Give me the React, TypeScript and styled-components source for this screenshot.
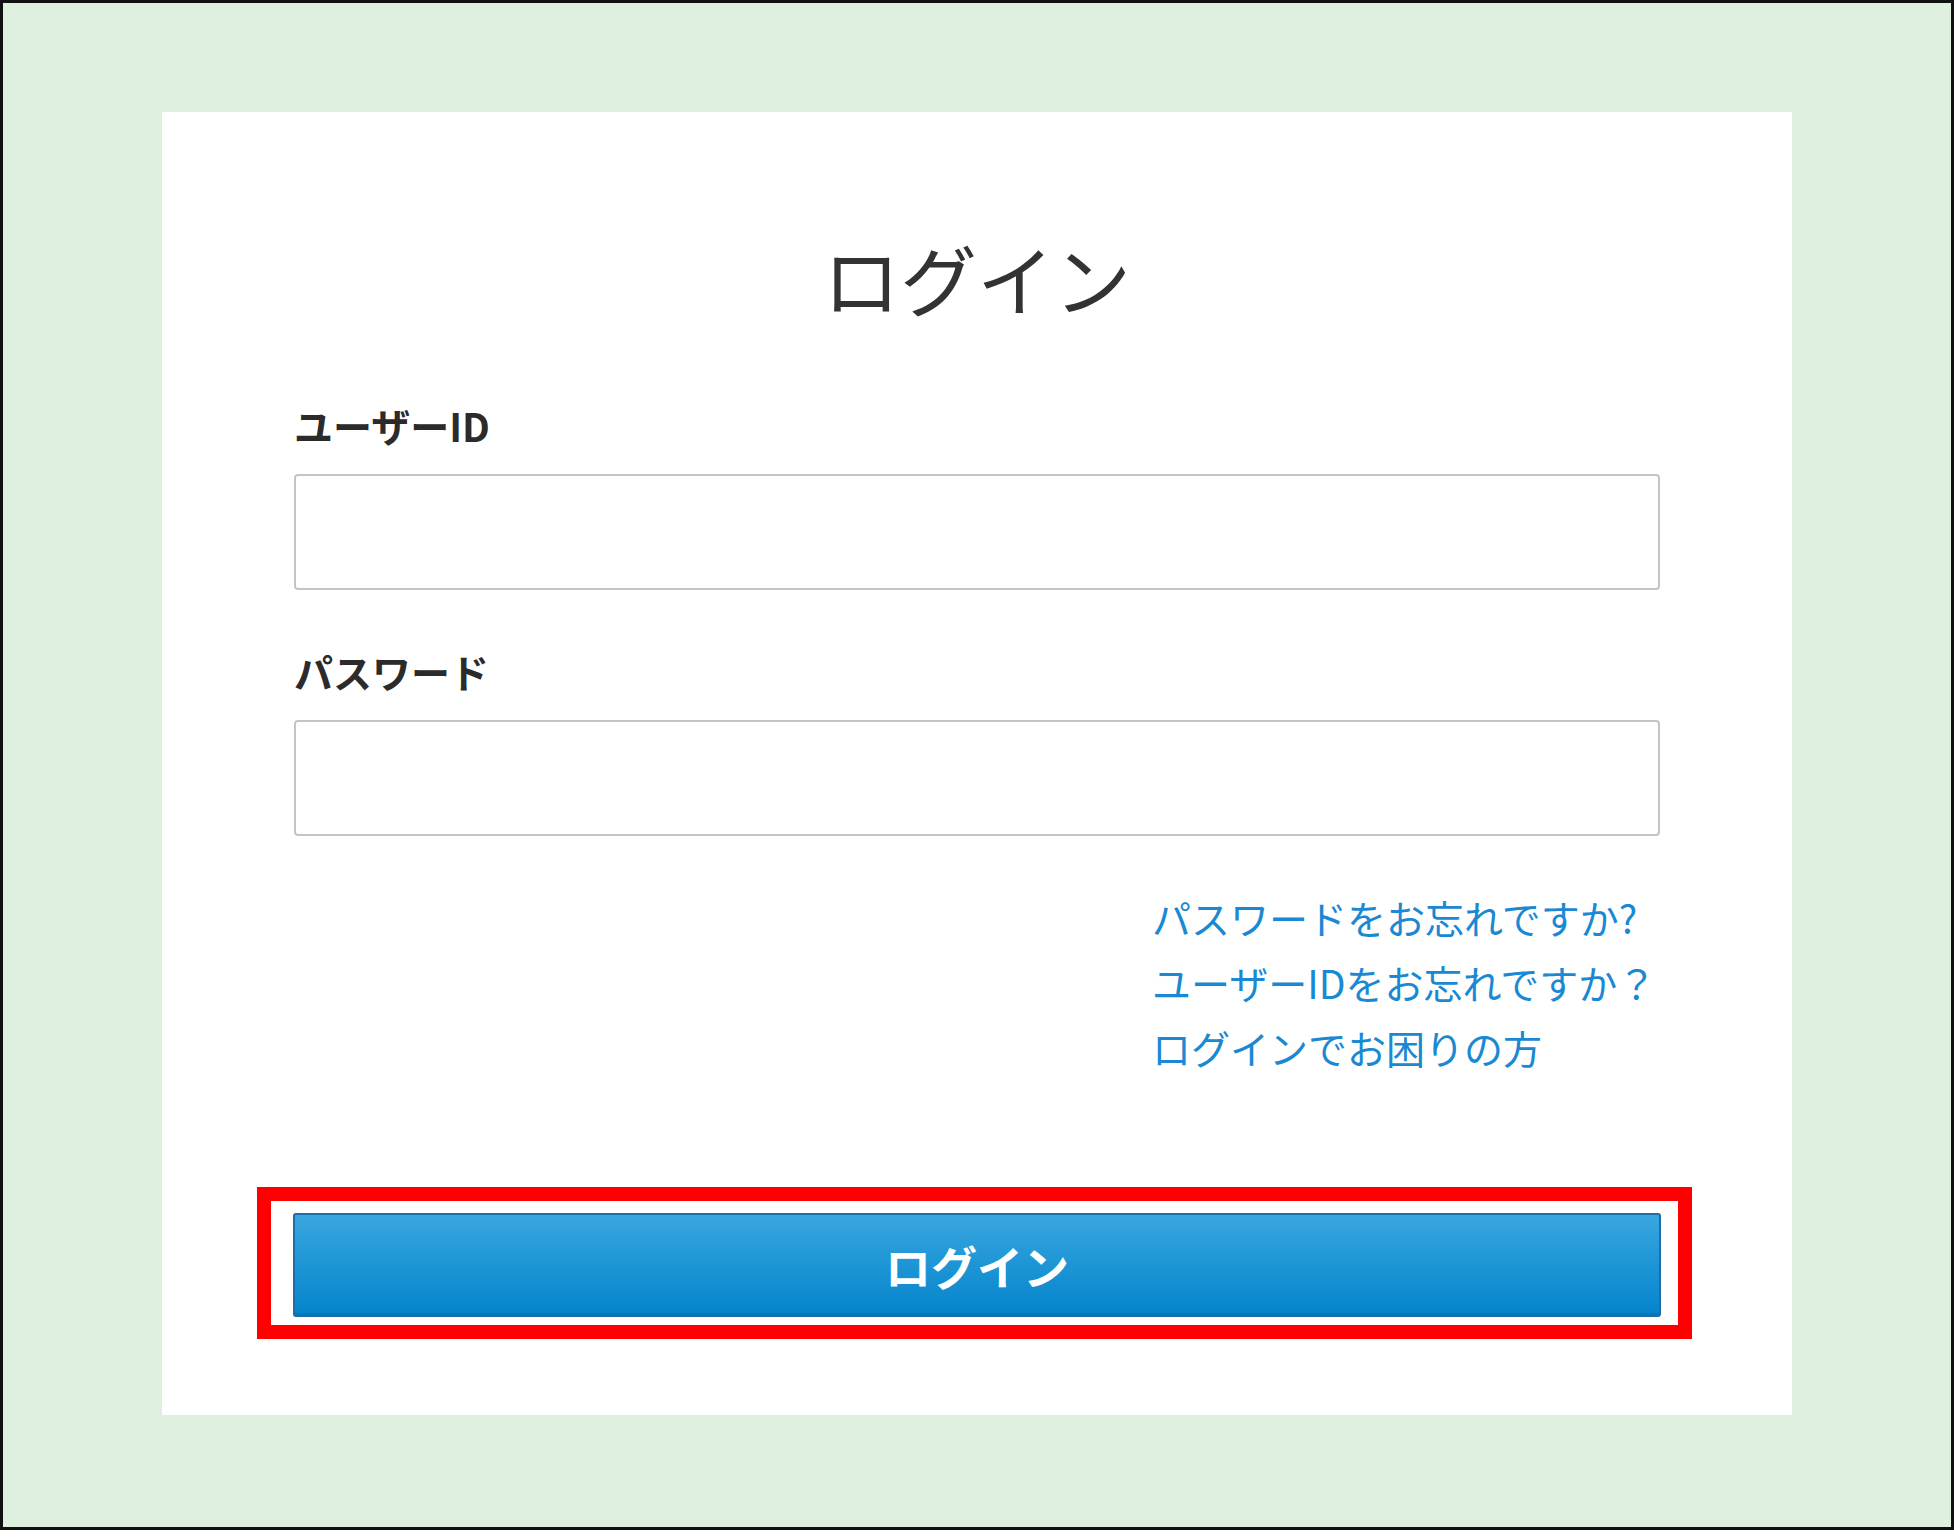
import styled, { createGlobalStyle } from 'styled-components';

const COLOR = {
  page: '#dff0de',
  frame: '#111111',
  text: '#333333',
  link: '#1a88d2',
  inputBorder: '#c4c4c4',
  highlight: '#ff0000',
};

const FONT = `'Noto Sans CJK JP', 'Noto Sans', sans-serif`;

const GlobalStyle = createGlobalStyle`
  html,
  body {
    margin: 0;
    padding: 0;
    background: #ffffff;
  }

  body {
    font-family: ${FONT};
    color: ${COLOR.text};
  }
`;

const Screen = styled.div`
  box-sizing: border-box;
  width: 1954px;
  height: 1530px;
  padding: 109px 0 0 159px;
  border: 3px solid ${COLOR.frame};
  background-color: ${COLOR.page};
`;

const Card = styled.div`
  box-sizing: border-box;
  display: flex;
  flex-direction: column;
  width: 1630px;
  height: 1303px;
  padding: 115px 132px 0;
  background-color: #ffffff;
`;

const Title = styled.h1`
  margin: 0;
  font-size: 77px;
  font-weight: 400;
  line-height: 102px;
  text-align: center;
  color: ${COLOR.text};
`;

const Label = styled.label<{ $gap: number }>`
  display: block;
  margin-top: ${(p) => p.$gap}px;
  font-size: 39px;
  font-weight: 700;
  line-height: 50px;
  color: #2b2b2b;
`;

const TextInput = styled.input`
  box-sizing: border-box;
  display: block;
  width: 100%;
  height: 116px;
  margin: 24px 0 0;
  padding: 0 16px;
  border: 2px solid ${COLOR.inputBorder};
  border-radius: 4px;
  background: #ffffff;
  font-family: ${FONT};
  font-size: 36px;
  outline: none;
`;

const HelpLinks = styled.div`
  display: flex;
  flex-direction: column;
  align-items: flex-start;
  margin: 49px 0 0 858px;

  a {
    font-size: 39px;
    line-height: 65px;
    color: ${COLOR.link};
    text-decoration: none;
    white-space: nowrap;
  }
`;

// red annotation box drawn around the login button
const HighlightFrame = styled.div`
  margin: 107px -32px 0 -37px;
  padding: 12px 17px 8px 22px;
  border: 14px solid ${COLOR.highlight};
`;

const LoginButton = styled.button`
  box-sizing: border-box;
  display: flex;
  align-items: center;
  justify-content: center;
  width: 100%;
  height: 104px;
  padding: 0;
  border: 2px solid #1d6da6;
  border-radius: 3px;
  background: linear-gradient(to bottom, #3aa6df 0%, #2097d6 45%, #0584cc 100%);
  box-shadow: inset 0 -2px 0 rgba(10, 90, 150, 0.35);
  font-family: ${FONT};
  font-size: 46px;
  font-weight: 700;
  color: #ffffff;
  cursor: pointer;
`;

const App = () => {
  return (
    <>
      <GlobalStyle />
      <Screen>
        <Card>
          <Title>ログイン</Title>

          <Label $gap={71} htmlFor='user-id'>
            ユーザーID
          </Label>
          <TextInput id='user-id' type='text' />

          <Label $gap={56} htmlFor='password'>
            パスワード
          </Label>
          <TextInput id='password' type='password' />

          <HelpLinks>
            <a href='#'>パスワードをお忘れですか?</a>
            <a href='#'>ユーザーIDをお忘れですか？</a>
            <a href='#'>ログインでお困りの方</a>
          </HelpLinks>

          <HighlightFrame>
            <LoginButton type='button'>ログイン</LoginButton>
          </HighlightFrame>
        </Card>
      </Screen>
    </>
  );
};

export default App;
